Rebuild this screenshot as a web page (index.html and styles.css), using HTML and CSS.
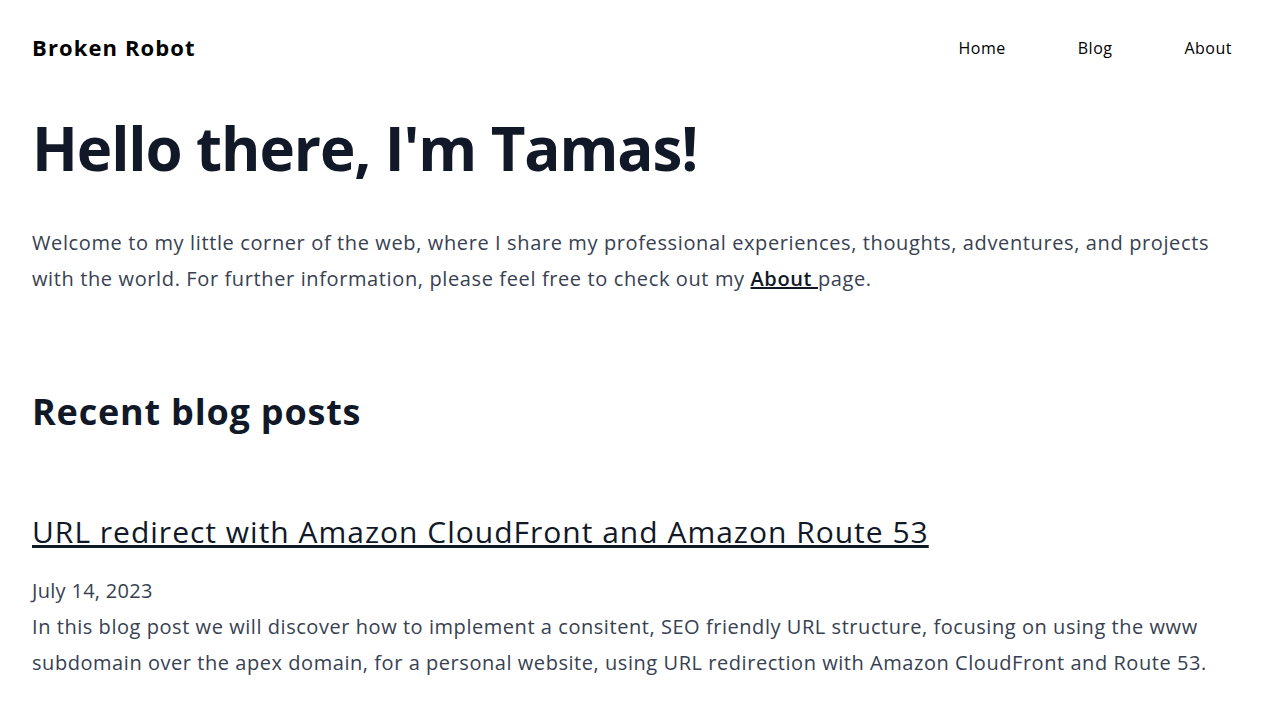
FILE: index.html
```html
<!DOCTYPE html>
<html lang="en">
<head>
<meta charset="utf-8">
<title>Broken Robot</title>
<link rel="stylesheet" href="styles.css">
</head>
<body>
<header class="site-header">
  <a class="brand" href="#">Broken Robot</a>
  <nav class="nav">
    <a href="#">Home</a>
    <a href="#">Blog</a>
    <a href="#">About</a>
  </nav>
</header>
<main class="main">
  <section class="intro">
    <h1 class="hero-title">Hello there, I'm Tamas!</h1>
    <p class="lead">Welcome to my little corner of the web, where I share my professional experiences, thoughts, adventures, and projects with the world. For further information, please feel free to check out my <a class="inline-link" href="#">About </a>page.</p>
  </section>
  <section class="recent">
    <h2 class="section-title">Recent blog posts</h2>
    <article class="post">
      <h3 class="post-title"><a href="#">URL redirect with Amazon CloudFront and Amazon Route 53</a></h3>
      <p class="post-date">July 14, 2023</p>
      <p class="post-summary">In this blog post we will discover how to implement a consitent, SEO friendly URL structure, focusing on using the www subdomain over the apex domain, for a personal website, using URL redirection with Amazon CloudFront and Route 53.</p>
    </article>
  </section>
</main>
</body>
</html>
```

FILE: styles.css
```css
* { box-sizing: border-box; }
html, body { margin: 0; padding: 0; background: #fff; }
body {
  font-family: "Open Sans", "Liberation Sans", sans-serif;
  color: #374151;
}
a { color: inherit; }
.site-header {
  display: flex;
  justify-content: space-between;
  align-items: center;
  padding: 32px 48px 0 32px;
  height: 64px;
}
.brand {
  font-size: 22px;
  font-weight: 700;
  letter-spacing: 1.1px;
  color: #000;
  text-decoration: none;
  transform: translateY(-1px);
}
.nav {
  display: flex;
  gap: 72px;
}
.nav a {
  font-size: 16px;
  letter-spacing: 0.5px;
  color: #000;
  text-decoration: none;
}
.main { padding: 0 32px; }
.hero-title {
  margin: 48px 0 0;
  font-size: 60px;
  line-height: 72px;
  font-weight: 700;
  letter-spacing: -1.1px;
  color: #111827;
}
.lead {
  margin: 41px 0 0;
  font-size: 20px;
  line-height: 36px;
  letter-spacing: 0.62px;
}
.inline-link {
  color: #111827;
  font-weight: 600;
}
.section-title {
  margin: 91px 0 0;
  font-size: 36px;
  line-height: 48px;
  font-weight: 700;
  letter-spacing: 0.8px;
  color: #111827;
}
.post-title {
  margin: 76px 0 0;
  font-size: 30px;
  line-height: 40px;
  font-weight: 500;
  letter-spacing: 1px;
  color: #111827;
}
.post-date {
  margin: 21px 0 0;
  font-size: 20px;
  line-height: 36px;
  letter-spacing: 0.3px;
}
.post-summary {
  margin: 0;
  font-size: 20px;
  line-height: 36px;
  letter-spacing: 0.55px;
}
```
